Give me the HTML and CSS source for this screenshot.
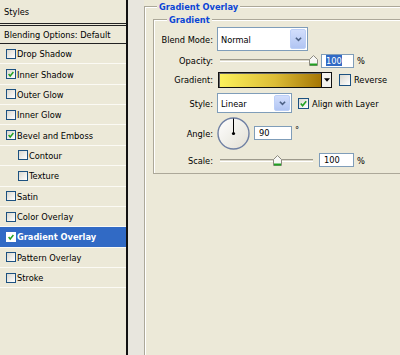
FILE: index.html
```html
<!DOCTYPE html>
<html lang="en">
<head>
    <meta charset="UTF-8">
    <title>Layer Style</title>
    <link rel="stylesheet" href="styles.css">
</head>
<body>
    <div class="dialog">
        <aside class="styles-list">
            <div class="list-head">Styles</div>
            <div class="list-blend">Blending Options: Default</div>
            <ul class="fx-list">
                <li class="fx"><span class="cb"></span>Drop Shadow</li>
                <li class="fx"><span class="cb on"><svg viewBox="0 0 10 10"><polyline points="2,5 4,7.5 8,2.5"/></svg></span>Inner Shadow</li>
                <li class="fx"><span class="cb"></span>Outer Glow</li>
                <li class="fx"><span class="cb"></span>Inner Glow</li>
                <li class="fx"><span class="cb on"><svg viewBox="0 0 10 10"><polyline points="2,5 4,7.5 8,2.5"/></svg></span>Bevel and Emboss</li>
                <li class="fx sub"><span class="cb"></span>Contour</li>
                <li class="fx sub"><span class="cb"></span>Texture</li>
                <li class="fx"><span class="cb"></span>Satin</li>
                <li class="fx"><span class="cb"></span>Color Overlay</li>
                <li class="fx active"><span class="cb on"><svg viewBox="0 0 10 10"><polyline points="2,5 4,7.5 8,2.5"/></svg></span>Gradient Overlay</li>
                <li class="fx"><span class="cb"></span>Pattern Overlay</li>
                <li class="fx"><span class="cb"></span>Stroke</li>
            </ul>
        </aside>
        <div class="gutter"></div>
        <main class="panel">
            <fieldset class="group outer">
                <legend>Gradient Overlay</legend>
                <fieldset class="group inner">
                    <legend>Gradient</legend>

                    <div class="row row-blend">
                        <span class="lbl">Blend Mode:</span>
                        <div class="combo wide">
                            <span>Normal</span>
                            <span class="combo-btn"><svg viewBox="0 0 10 8"><polyline points="2,2 5,5 8,2"/></svg></span>
                        </div>
                    </div>

                    <div class="row row-opacity">
                        <span class="lbl">Opacity:</span>
                        <div class="slider">
                            <span class="thumb" style="left: 89px;"><svg viewBox="0 0 9 11"><path class="thumb-body" d="M0.5 4.5 L4.5 0.5 L8.5 4.5 V10.5 H0.5 Z"/><rect class="thumb-foot" x="1" y="8.5" width="7" height="2"/></svg></span>
                        </div>
                        <span class="num"><span class="sel">100</span></span>
                        <span class="unit">%</span>
                    </div>

                    <div class="row row-gradient">
                        <span class="lbl">Gradient:</span>
                        <div class="grad-pick">
                            <span class="grad-bar"></span>
                            <span class="grad-drop"><svg viewBox="0 0 7 4"><polygon points="0,0 7,0 3.5,4"/></svg></span>
                        </div>
                        <span class="cb big"></span>
                        <span class="cb-text">Reverse</span>
                    </div>

                    <div class="row row-style">
                        <span class="lbl">Style:</span>
                        <div class="combo narrow">
                            <span>Linear</span>
                            <span class="combo-btn"><svg viewBox="0 0 10 8"><polyline points="2,2 5,5 8,2"/></svg></span>
                        </div>
                        <span class="cb mid on"><svg viewBox="0 0 10 10"><polyline points="2,5 4,7.5 8,2.5"/></svg></span>
                        <span class="cb-text">Align with Layer</span>
                    </div>

                    <div class="row row-angle">
                        <span class="lbl">Angle:</span>
                        <svg class="dial" viewBox="0 0 33 33">
                            <defs>
                                <linearGradient id="dialFill" x1="0" y1="0" x2="1" y2="1">
                                    <stop offset="0" stop-color="#ffffff"/>
                                    <stop offset="1" stop-color="#e2dfd4"/>
                                </linearGradient>
                            </defs>
                            <circle cx="16.5" cy="16.5" r="15.5" fill="url(#dialFill)" stroke="#6e7fa3" stroke-width="1.4"/>
                            <line x1="16.5" y1="1.5" x2="16.5" y2="16.5" stroke="#000" stroke-width="1"/>
                            <circle cx="16.5" cy="16.5" r="1.6" fill="#000"/>
                        </svg>
                        <span class="num angle-num">90</span>
                        <span class="deg">°</span>
                    </div>

                    <div class="row row-scale">
                        <span class="lbl">Scale:</span>
                        <div class="slider">
                            <span class="thumb" style="left: 53px;"><svg viewBox="0 0 9 11"><path class="thumb-body" d="M0.5 4.5 L4.5 0.5 L8.5 4.5 V10.5 H0.5 Z"/><rect class="thumb-foot" x="1" y="8.5" width="7" height="2"/></svg></span>
                        </div>
                        <span class="num scale-num">100</span>
                        <span class="unit">%</span>
                    </div>
                </fieldset>
            </fieldset>
        </main>
    </div>
</body>
</html>
```

FILE: styles.css
```css
* {
    box-sizing: border-box;
}

body {
    margin: 0;
    background: #ece9d8;
    color: #000;
    font-family: 'DejaVu Sans Condensed', 'DejaVu Sans', sans-serif;
    font-size: 9.2px;
    overflow: hidden;
}

.dialog {
    display: flex;
    height: 355px;
}

/* left: list of effects */
.styles-list {
    width: 128px;
    flex: none;
    border-right: 2px solid #111;
}

.list-head {
    height: 26px;
    line-height: 23px;
    padding-left: 4px;
    border-bottom: 3px double #222;
}

.list-blend {
    height: 18px;
    line-height: 17px;
    padding-left: 4px;
    border-bottom: 1px solid #222;
}

.fx-list {
    list-style: none;
    margin: 0;
    padding: 0;
}

.fx {
    height: 20.36px;
    display: flex;
    align-items: center;
    padding-left: 6px;
    border-bottom: 1px solid #fbfaf4;
}

.fx.sub {
    padding-left: 18px;
}

.fx.active {
    background: #316ac5;
    color: #fff;
    font-weight: bold;
}

.cb {
    width: 10px;
    height: 10px;
    flex: none;
    margin-right: 1px;
    border: 1px solid #1c5180;
    background: linear-gradient(135deg, #d9d8d0, #ffffff);
    display: inline-flex;
}

.cb svg {
    width: 100%;
    height: 100%;
}

.cb polyline {
    fill: none;
    stroke: #21a121;
    stroke-width: 1.8;
}

.fx.active .cb {
    border-color: #fff;
    background: #fff;
}

.cb.big {
    width: 12px;
    height: 12px;
    margin-left: 7px;
}

.cb.mid {
    width: 11px;
    height: 11px;
    margin-left: 6px;
}

.cb-text {
    margin-left: 2px;
}

.gutter {
    width: 16px;
    flex: none;
    background: #e8e6de;
}

/* right: options */
.panel {
    flex: 1;
    overflow: hidden;
}

.group {
    margin: 0;
    padding: 0;
    min-width: 0;
    border: 1px solid #aca899;
    box-shadow: inset 1px 1px 0 #fff;
}

.group > legend {
    padding: 0 2px;
    line-height: 13px;
    font-weight: bold;
    color: #0b45d6;
    background: #ece9d8;
}

.outer {
    width: 320px;
    height: 420px;
}

.outer > legend {
    margin-left: 12px;
}

.inner {
    width: 300px;
    margin-left: 8px;
    padding-bottom: 3px;
}

.inner > legend {
    margin-left: 13px;
}

.row {
    display: flex;
    align-items: center;
}

.lbl {
    width: 59px;
    flex: none;
    margin-right: 4px;
    text-align: right;
}

.row-blend { height: 26px; }
.row-opacity { height: 17px; }
.row-gradient { height: 21px; }
.row-style { height: 26px; }
.row-angle { height: 34px; }
.row-scale { height: 20px; }

.combo {
    display: flex;
    align-items: center;
    justify-content: space-between;
    padding: 1px 1px 1px 3px;
    border: 1px solid #7f9db9;
    background: #fff;
}

.combo.wide {
    width: 91px;
    height: 24px;
}

.combo.narrow {
    width: 75px;
    height: 20px;
}

.combo-btn {
    width: 16px;
    align-self: stretch;
    display: flex;
    align-items: center;
    justify-content: center;
    border: 1px solid #bccff7;
    border-radius: 2px;
    background: linear-gradient(#d2defc, #b1c5f3);
}

.combo-btn svg {
    width: 9px;
    height: 7px;
}

.combo-btn polyline {
    fill: none;
    stroke: #4d6185;
    stroke-width: 1.8;
}

.slider {
    position: relative;
    width: 93px;
    height: 3px;
    margin-left: 3px;
    border-top: 1px solid #9d9a8c;
    border-bottom: 1px solid #fff;
    background: #dcd9cc;
}

.thumb {
    position: absolute;
    top: -5px;
    width: 9px;
    height: 11px;
}

.thumb svg {
    display: block;
    width: 9px;
    height: 11px;
}

.thumb-body {
    fill: #f7f7f4;
    stroke: #8c8a80;
}

.thumb-foot {
    fill: #21a121;
}

.num {
    height: 14px;
    width: 33px;
    margin-left: 8px;
    padding-left: 4px;
    line-height: 12px;
    border: 1px solid #7f9db9;
    background: #fff;
}

.sel {
    background: #316ac5;
    color: #fff;
}

.unit {
    margin-left: 3px;
}

.grad-pick {
    display: flex;
    height: 16px;
    margin-left: 1px;
    border: 1px solid #111;
}

.grad-bar {
    width: 102px;
    background: linear-gradient(to right, #fcf25c, #dcbc36 55%, #a57605);
    box-shadow: inset 1px 1px 0 #666;
}

.grad-drop {
    width: 10px;
    display: flex;
    align-items: center;
    justify-content: center;
    border-left: 1px solid #111;
    background: #f4f3ee;
}

.grad-drop svg {
    width: 6px;
    height: 4px;
}

.dial {
    width: 33px;
    height: 33px;
    flex: none;
}

.angle-num {
    width: 38px;
    margin-left: 4px;
}

.deg {
    margin-left: 3px;
    align-self: flex-start;
    margin-top: 8px;
}

.scale-num {
    width: 35px;
    margin-left: 6px;
}
```
